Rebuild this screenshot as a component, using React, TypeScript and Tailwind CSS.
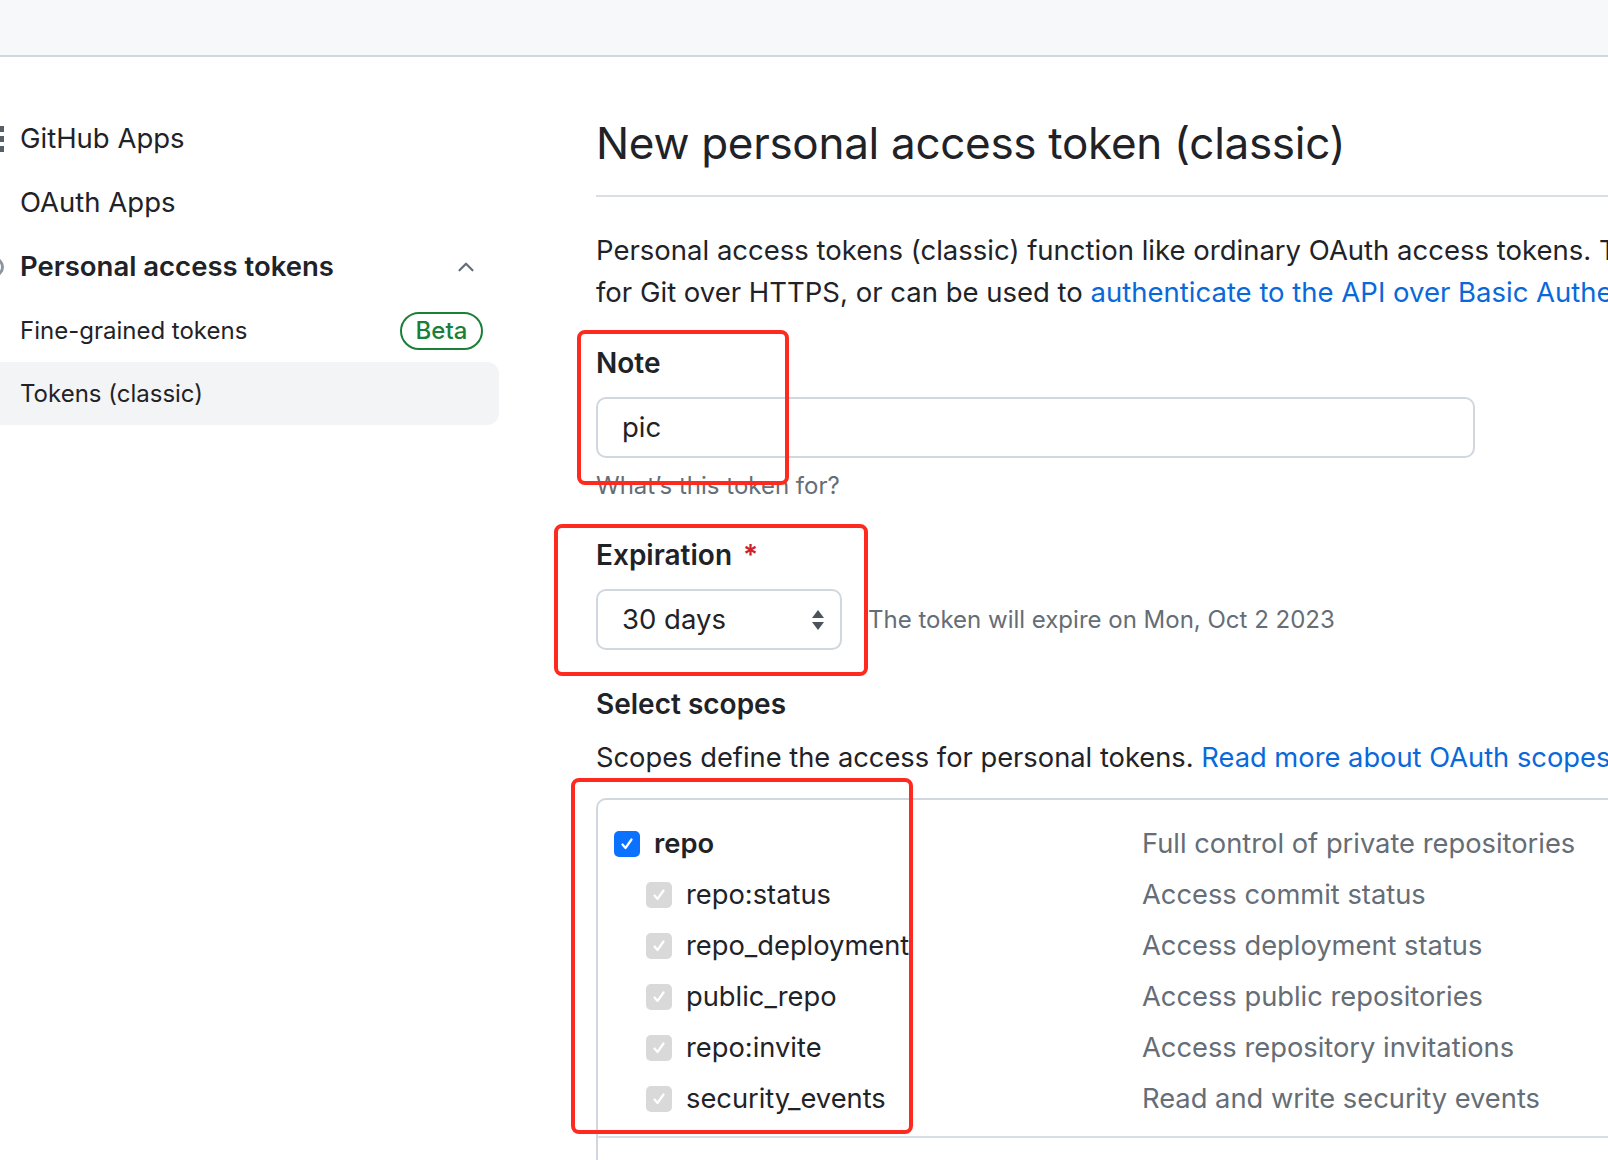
import { ChevronUp } from 'lucide-react';

const font = { fontFamily: 'Inter, "Noto Sans", sans-serif' };

const scopes = [
  { name: 'repo:status', desc: 'Access commit status' },
  { name: 'repo_deployment', desc: 'Access deployment status' },
  { name: 'public_repo', desc: 'Access public repositories' },
  { name: 'repo:invite', desc: 'Access repository invitations' },
  { name: 'security_events', desc: 'Read and write security events' },
];

const Check = ({ on }: { on: boolean }) => (
  <div
    className={
      'flex items-center justify-center w-[26px] h-[26px] rounded-[5px] shrink-0 ' +
      (on ? 'bg-[#0a72ff]' : 'bg-[#d9d9d9]')
    }
  >
    <svg width="16" height="16" viewBox="0 0 16 16" fill="none">
      <path d="M3.5 8.5l3 3.5 6-8.5" stroke="white" strokeWidth="2.2" strokeLinecap="round" strokeLinejoin="round" />
    </svg>
  </div>
);

export default function App() {
  return (
    <div className="relative w-[1608px] h-[1160px] overflow-hidden bg-white text-[#1f2328]" style={font}>
      {/* top bar */}
      <div className="h-[57px] bg-[#f6f8fa] border-b-2 border-[#d0d7de]" />

      <div className="flex">
        {/* sidebar */}
        <nav className="w-[499px] shrink-0 pt-[50px]">
          <div className="flex items-center h-[64px] -ml-[16px] gap-4">
            <div className="w-5 h-[28px] flex flex-col justify-between py-[1px] items-end">
              <div className="w-[4px] h-[6px] bg-[#57606a]" />
              <div className="w-[4px] h-[6px] bg-[#57606a]" />
              <div className="w-[4px] h-[6px] bg-[#57606a]" />
            </div>
            <span className="text-[27.5px]">GitHub Apps</span>
          </div>
          <div className="flex items-center h-[64px] pl-[20px]">
            <span className="text-[27.5px]">OAuth Apps</span>
          </div>
          <div className="flex items-center h-[64px] -ml-[16px] gap-4 pr-[20px]">
            <div className="w-5 h-5 rounded-full border-[3px] border-[#8c959f]" />
            <span className="text-[27.5px] font-semibold flex-1">Personal access tokens</span>
            <ChevronUp size={26} strokeWidth={2} className="text-[#656d76]" />
          </div>
          <div className="flex items-center h-[63px] pl-[20px] pr-[16px] justify-between">
            <span className="text-[24px]">Fine-grained tokens</span>
            <span className="flex items-center justify-center w-[83px] h-[38px] rounded-full border-2 border-[#1a7f37] text-[#1a7f37] text-[24px] font-medium">
              Beta
            </span>
          </div>
          <div className="flex items-center h-[63px] pl-[20px] bg-[#f3f4f6] rounded-r-[12px]">
            <span className="text-[24px]">Tokens (classic)</span>
          </div>
        </nav>

        {/* main */}
        <main className="ml-[97px] w-[1200px] shrink-0">
          <h1 className="pt-[58px] pb-[24px] text-[44px] leading-[56px] border-b-2 border-[#d8dee4] tracking-[-0.3px] whitespace-nowrap">
            New personal access token (classic)
          </h1>

          <p className="mt-[32px] text-[27.5px] leading-[42px] whitespace-nowrap">
            Personal access tokens (classic) function like ordinary OAuth access tokens. They can be used instead of a password
            <br />
            for Git over HTTPS, or can be used to{' '}
            <span className="text-[#0969da]">authenticate to the API over Basic Authentication</span>.
          </p>

          <div className="mt-[32px] text-[28px] font-semibold leading-[36px]">Note</div>
          <div className="mt-[16px] w-[879px] h-[61px] rounded-[10px] border-2 border-[#d0d7de] flex items-center pl-[24px] text-[27.5px]">
            pic
          </div>
          <div className="mt-[12px] text-[24px] text-[#656d76] leading-[32px]">What’s this token for?</div>

          <div className="mt-[35px] text-[28px] font-semibold leading-[36px]">
            Expiration <span className="text-[#cf222e] ml-[4px]">*</span>
          </div>
          <div className="mt-[16px] flex items-center">
            <div className="w-[246px] h-[61px] rounded-[10px] border-2 border-[#d0d7de] flex items-center justify-between pl-[24px] pr-[14px] text-[27.5px]">
              <span>30 days</span>
              <svg width="16" height="24" viewBox="0 0 16 24">
                <path d="M8 2l6 8H2z" fill="#4b535d" />
                <path d="M8 22l6-8H2z" fill="#4b535d" />
              </svg>
            </div>
            <span className="ml-[26px] text-[24px] text-[#656d76]">The token will expire on Mon, Oct 2 2023</span>
          </div>

          <div className="mt-[36px] text-[28px] font-semibold leading-[36px]">Select scopes</div>
          <p className="mt-[16px] text-[27.3px] leading-[40px] whitespace-nowrap">
            Scopes define the access for personal tokens.{' '}
            <span className="text-[#0969da]">Read more about OAuth scopes.</span>
          </p>

          <div className="mt-[20px] w-[1200px] h-[400px] border-2 border-[#d0d7de] rounded-tl-[10px] border-b-0 border-r-0">
            <div className="pt-[28px] pb-[21px] pl-[16px] border-b-2 border-[#d8dee4]">
              <div className="flex items-center h-[32px]">
                <div className="w-[528px] flex items-center gap-[14px]">
                  <Check on />
                  <span className="text-[27.3px] font-semibold">repo</span>
                </div>
                <span className="text-[27.3px] text-[#656d76]">Full control of private repositories</span>
              </div>
              {scopes.map((s) => (
                <div key={s.name} className="flex items-center h-[32px] mt-[19px]">
                  <div className="w-[528px] flex items-center gap-[14px] pl-[32px]">
                    <Check on={false} />
                    <span className="text-[27.3px]">{s.name}</span>
                  </div>
                  <span className="text-[27.3px] text-[#656d76]">{s.desc}</span>
                </div>
              ))}
            </div>
          </div>
        </main>
      </div>

      {/* red annotation boxes */}
      <div className="absolute left-[577px] top-[330px] w-[212px] h-[155px] border-[4px] border-[#ff2a1f] rounded-[8px]" />
      <div className="absolute left-[554px] top-[524px] w-[314px] h-[152px] border-[4px] border-[#ff2a1f] rounded-[8px]" />
      <div className="absolute left-[571px] top-[778px] w-[342px] h-[356px] border-[4px] border-[#ff2a1f] rounded-[8px]" />
    </div>
  );
}
